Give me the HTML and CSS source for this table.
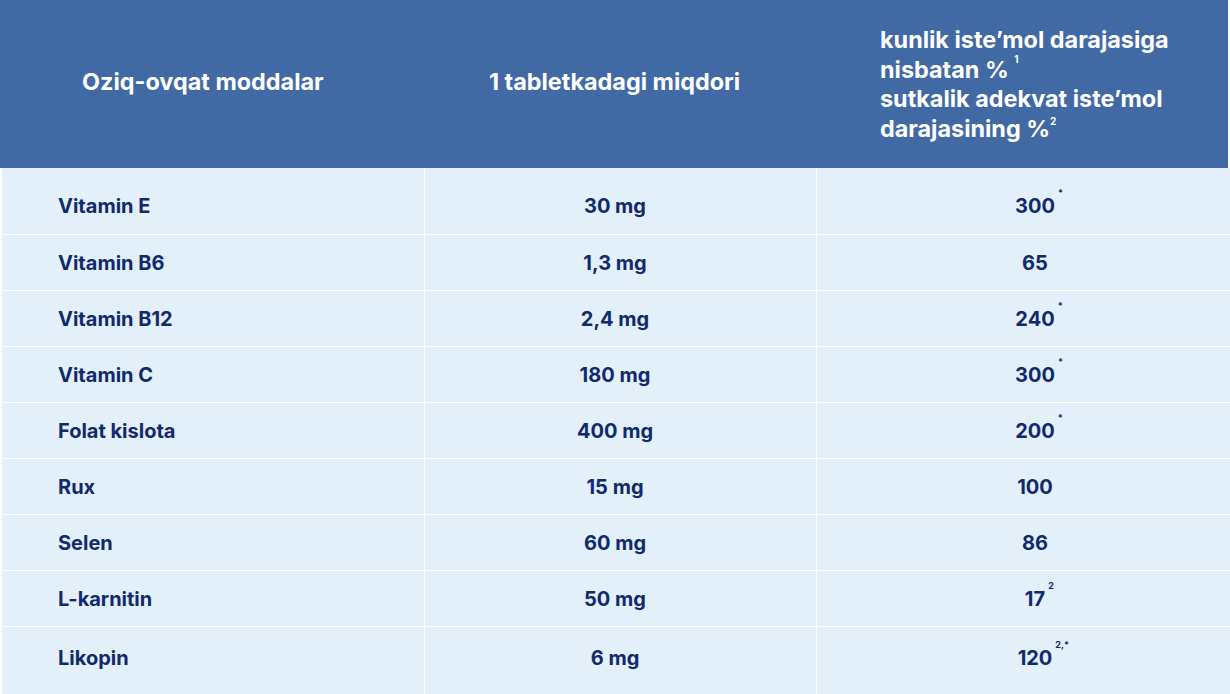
FILE: index.html
```html
<!DOCTYPE html>
<html lang="uz">
<head>
<meta charset="utf-8">
<title>Tarkibi</title>
<link rel="stylesheet" href="styles.css">
</head>
<body>
<div class="table">
  <div class="head">
    <div class="hcell h1">Oziq-ovqat moddalar</div>
    <div class="hcell h2">1 tabletkadagi miqdori</div>
    <div class="hcell h3">kunlik iste’mol darajasiga<br>nisbatan % <sup class="s1">1</sup><br>sutkalik adekvat iste’mol<br>darajasining %<sup class="s2">2</sup></div>
  </div>
  <div class="body">
    <div class="row first"><div class="cell c1">Vitamin E</div><div class="cell c2">30 mg</div><div class="cell c3"><span class="val">300<sup>*</sup></span></div></div>
    <div class="row"><div class="cell c1">Vitamin B6</div><div class="cell c2">1,3 mg</div><div class="cell c3"><span class="val">65</span></div></div>
    <div class="row"><div class="cell c1">Vitamin B12</div><div class="cell c2">2,4 mg</div><div class="cell c3"><span class="val">240<sup>*</sup></span></div></div>
    <div class="row"><div class="cell c1">Vitamin C</div><div class="cell c2">180 mg</div><div class="cell c3"><span class="val">300<sup>*</sup></span></div></div>
    <div class="row"><div class="cell c1">Folat kislota</div><div class="cell c2">400 mg</div><div class="cell c3"><span class="val">200<sup>*</sup></span></div></div>
    <div class="row"><div class="cell c1">Rux</div><div class="cell c2">15 mg</div><div class="cell c3"><span class="val">100</span></div></div>
    <div class="row"><div class="cell c1">Selen</div><div class="cell c2">60 mg</div><div class="cell c3"><span class="val">86</span></div></div>
    <div class="row"><div class="cell c1">L-karnitin</div><div class="cell c2">50 mg</div><div class="cell c3"><span class="val">17<sup>2</sup></span></div></div>
    <div class="row last"><div class="cell c1">Likopin</div><div class="cell c2">6 mg</div><div class="cell c3"><span class="val">120<sup>2,*</sup></span></div></div>
  </div>
</div>
</body>
</html>
```
FILE: styles.css
```css
html, body {
  margin: 0;
  padding: 0;
  background: #ffffff;
}
body {
  font-family: Inter, "Liberation Sans", sans-serif;
  width: 1230px;
  height: 694px;
  overflow: hidden;
}
.table {
  width: 1230px;
}
.head {
  display: grid;
  grid-template-columns: 425px 392px 1fr;
  height: 168px;
  margin-right: 2px;
  background: #416aa5;
  color: #ffffff;
  font-weight: 700;
  font-size: 23.4px;
}
.hcell {
  display: flex;
  align-items: center;
  padding-bottom: 6px;
}
.h1 {
  padding-left: 82px;
}
.h2 {
  justify-content: center;
  padding-right: 13px;
}
.h3 {
  display: block;
  padding: 25px 0 0 63px;
  line-height: 29.5px;
  white-space: nowrap;
}
.h3 sup {
  font-size: 10px;
  line-height: 0;
}
.h3 .s1 {
  vertical-align: 15px;
}
.h3 .s2 {
  vertical-align: 12px;
}
.body {
  margin-left: 2px;
  color: #102a6b;
  font-weight: 700;
  font-size: 20px;
}
.row {
  display: grid;
  grid-template-columns: 423px 392px 1fr;
  height: 55px;
  border-top: 1px solid #ffffff;
}
.row.first {
  border-top: 0;
  height: 66px;
}
.row.last {
  height: 67px;
}
.cell {
  background: #e3eff9;
  display: flex;
  align-items: center;
  border-right: 1px solid #ffffff;
}
.row.first .cell {
  padding-top: 9px;
}
.row.last .cell {
  padding-bottom: 6px;
}
.c1 {
  padding-left: 56px;
}
.c2 {
  justify-content: center;
  padding-right: 11px;
}
.c3 {
  justify-content: center;
  padding-left: 23px;
  border-right: 0;
}
.val {
  position: relative;
  line-height: 24px;
}
.val sup {
  position: absolute;
  left: 100%;
  top: -6px;
  margin-left: 3px;
  font-size: 9px;
  line-height: 1;
  vertical-align: baseline;
}
```
